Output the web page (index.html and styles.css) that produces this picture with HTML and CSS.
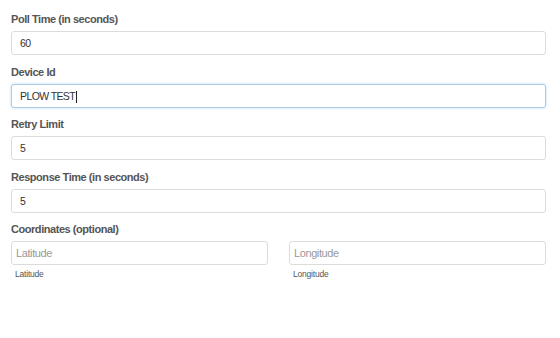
FILE: index.html
```html
<!DOCTYPE html>
<html lang="en">
<head>
    <meta charset="UTF-8">
    <meta name="viewport" content="width=device-width, initial-scale=1.0">
    <title>Device Settings</title>
    <link rel="stylesheet" href="styles.css">
</head>
<body>
    <form class="settings-form">
        <div class="form-group">
            <label class="field-label">Poll Time (in seconds)</label>
            <div class="text-input">60</div>
        </div>

        <div class="form-group">
            <label class="field-label">Device Id</label>
            <div class="text-input focused">PLOW TEST<span class="caret"></span></div>
        </div>

        <div class="form-group">
            <label class="field-label">Retry Limit</label>
            <div class="text-input">5</div>
        </div>

        <div class="form-group">
            <label class="field-label">Response Time (in seconds)</label>
            <div class="text-input">5</div>
        </div>

        <div class="form-group">
            <label class="field-label">Coordinates (optional)</label>
            <div class="coords">
                <div class="coord-col">
                    <div class="text-input placeholder">Latitude</div>
                    <span class="help-text">Latitude</span>
                </div>
                <div class="coord-col">
                    <div class="text-input placeholder">Longitude</div>
                    <span class="help-text">Longitude</span>
                </div>
            </div>
        </div>
    </form>
</body>
</html>
```

FILE: styles.css
```css
/* General Styles */
body {
    font-family: "Liberation Sans", Arial, sans-serif;
    background: #fff;
    margin: 0;
    padding: 0;
}

/* Form */
.settings-form {
    padding: 12px 14px 0 11px;
}

.form-group {
    margin-bottom: 9.5px;
}

.field-label {
    display: block;
    font-size: 11px;
    font-weight: bold;
    letter-spacing: -0.45px;
    color: #555;
    height: 14px;
    line-height: 14px;
    margin-bottom: 5px;
}

/* Inputs */
.text-input {
    box-sizing: border-box;
    height: 24px;
    line-height: 22px;
    padding: 0 8px;
    border: 1px solid #dcdcdc;
    border-radius: 3px;
    font-size: 10.5px;
    letter-spacing: -0.6px;
    color: #333;
    background: #fff;
}

.text-input.focused {
    border-color: #a9cbe8;
    box-shadow: 0 0 3px rgba(102, 175, 233, 0.45);
}

.caret {
    display: inline-block;
    width: 1px;
    height: 12px;
    margin-left: 1px;
    background: #222;
    vertical-align: -3px;
}

.text-input.placeholder {
    padding-left: 4px;
    font-size: 11px;
    letter-spacing: -0.4px;
    color: #999;
}

/* Coordinates */
.coords {
    display: grid;
    grid-template-columns: 1fr 1fr;
    column-gap: 21px;
}

.help-text {
    display: block;
    margin-top: 4px;
    padding-left: 4px;
    font-size: 8.5px;
    letter-spacing: -0.2px;
    color: #555;
}
```
